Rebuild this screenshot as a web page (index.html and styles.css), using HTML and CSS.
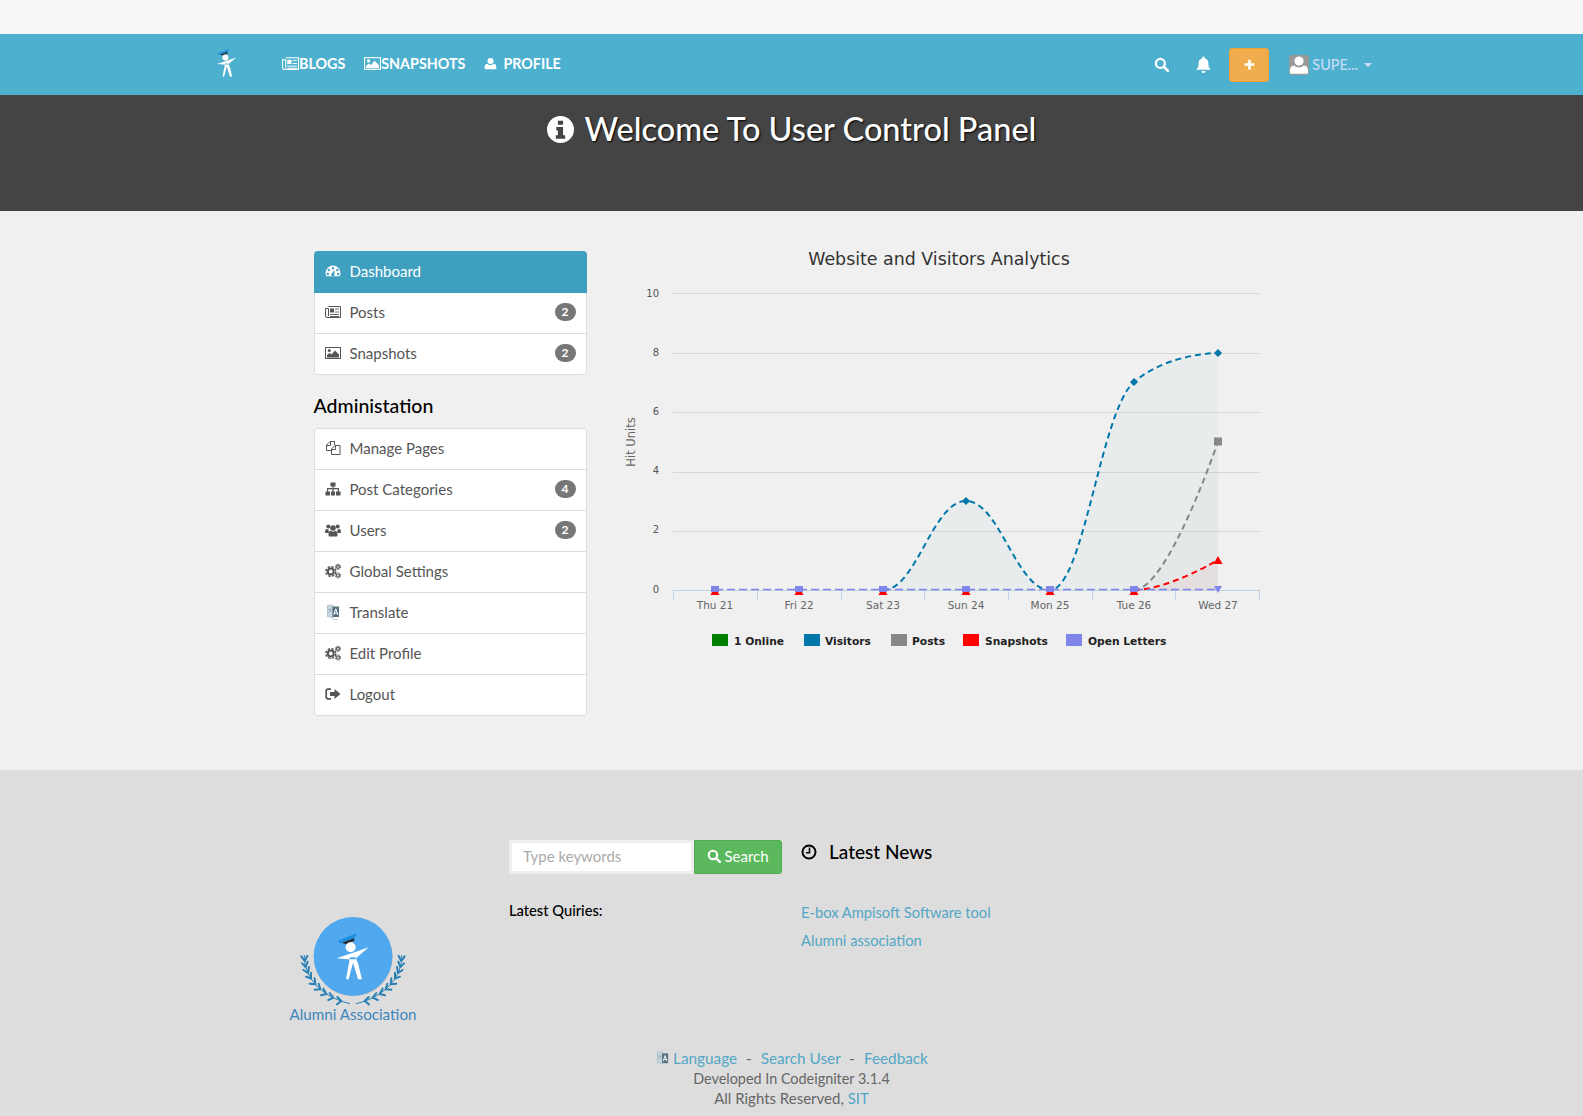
FILE: index.html
```html
<!DOCTYPE html>
<html lang="en">
<head>
    <meta charset="UTF-8">
    <title>User Control Panel</title>
    <link rel="stylesheet" href="styles.css">
</head>
<body>
    <!-- icon set -->
    <svg class="sprite" xmlns="http://www.w3.org/2000/svg">
        <symbol id="i-news" viewBox="0 0 16 16">
            <path fill="none" stroke="currentColor" d="M3.500 2.500h12v11H2A1.500 1.500 0 0 1 .5 12V4.500h3V12"/>
            <rect x="5" y="4.500" width="4" height="4" fill="currentColor"/>
            <path fill="none" stroke="currentColor" d="M10 5h4M10 8h4M5 10.500h9M5 12.500h9" stroke-width=".9"/>
        </symbol>
        <symbol id="i-picture" viewBox="0 0 16 16">
            <rect x=".5" y="2.500" width="15" height="11" fill="none" stroke="currentColor"/>
            <circle cx="4.300" cy="5.600" r="1.500" fill="currentColor"/>
            <path fill="currentColor" d="M2 12.500V10l2.500-2 2 1.500L10 5.500l4 4v3z"/>
        </symbol>
        <symbol id="i-user" viewBox="0 0 16 16">
            <circle cx="8" cy="4.800" r="3.700" fill="currentColor"/>
            <path fill="currentColor" d="M2 15c-1 0-1.300-.8-1.300-1.700 0-2.700.8-5 3.500-5 1 1 2.300 1.600 3.800 1.600s2.800-.6 3.800-1.600c2.700 0 3.500 2.300 3.500 5 0 .9-.3 1.700-1.300 1.700z"/>
        </symbol>
        <symbol id="i-search" viewBox="0 0 16 16">
            <circle cx="6.800" cy="6.800" r="4.800" fill="none" stroke="currentColor" stroke-width="2.400"/>
            <path d="M10.400 10.400l4.300 4.300" stroke="currentColor" stroke-width="2.800" stroke-linecap="round"/>
        </symbol>
        <symbol id="i-bell" viewBox="0 0 16 16">
            <path fill="currentColor" d="M8 .5a1.200 1.200 0 0 1 1.100 1.500C11.400 2.500 12.600 4.300 12.600 6.500c0 3.500.8 5 2.400 6.500H1c1.600-1.500 2.400-3 2.400-6.500C3.400 4.300 4.600 2.500 6.900 2A1.200 1.200 0 0 1 8 .5z"/>
            <path fill="currentColor" d="M6 14h4a2 2 0 0 1-4 0z"/>
        </symbol>
        <symbol id="i-plus" viewBox="0 0 16 16">
            <path fill="currentColor" d="M6.400 2h3.200v4.400H14v3.200H9.600V14H6.400V9.600H2V6.400h4.400z"/>
        </symbol>
        <symbol id="i-info" viewBox="0 0 26 26">
            <circle cx="13" cy="13" r="13" fill="#fff"/>
            <path fill="#444" d="M10.500 4.500h5v4h-5zM9 10.500h6.500v8H17.500v3.500h-9v-3.500h2v-4.500H9z"/>
        </symbol>
        <symbol id="i-dash" viewBox="0 0 16 16">
            <path fill="currentColor" fill-rule="evenodd" d="M8 2.500a7.500 7.500 0 0 1 7.500 7.500c0 1.200-.3 2.300-.8 3.300H1.300A7.500 7.500 0 0 1 .5 10 7.500 7.500 0 0 1 8 2.500zM8 4a1.200 1.200 0 1 0 0 2.400A1.200 1.200 0 0 0 8 4zM3.700 5.800a1.200 1.200 0 1 0 0 2.400 1.200 1.200 0 0 0 0-2.400zM12.300 5.800a1.200 1.200 0 1 0 0 2.400 1.200 1.200 0 0 0 0-2.400zM2.800 9.800a1.200 1.200 0 1 0 0 2.400 1.200 1.200 0 0 0 0-2.400zM13.200 9.800a1.200 1.200 0 1 0 0 2.400 1.200 1.200 0 0 0 0-2.400zM9.800 6.800 7.300 9.900a1.700 1.700 0 1 0 2 .6z"/>
        </symbol>
        <symbol id="i-files" viewBox="0 0 16 16">
            <path fill="none" stroke="currentColor" d="M6.500 10.500H1.500V5L5 1.500h4.500v3.500"/>
            <path fill="none" stroke="currentColor" d="M1.500 5.500H5.500V1.500"/>
            <path fill="none" stroke="currentColor" d="M6.500 9 10 5.500h5v9H6.500zM6.500 9.500h4v-4"/>
        </symbol>
        <symbol id="i-sitemap" viewBox="0 0 16 16">
            <path fill="currentColor" d="M5.500 1.500h5v4H8.600V7H14v3.500h1.500v4h-4.500v-4h1.800V8.200H8.600v2.300h1.400v4H6v-4h1.400V8.200H3.200v2.300H5v4H.5v-4H2V7h5.400V5.500H5.500z"/>
        </symbol>
        <symbol id="i-users" viewBox="0 0 16 16">
            <circle cx="3.300" cy="4.600" r="2" fill="currentColor"/>
            <circle cx="12.700" cy="4.600" r="2" fill="currentColor"/>
            <circle cx="8" cy="6" r="2.800" fill="currentColor"/>
            <path fill="currentColor" d="M0 10.500C0 8 .8 7 2.200 7.100c.5.400 1 .6 1.500.6-.2 1-.1 2.400.5 3.300H.8c-.5 0-.8-.2-.8-.5zM16 10.500C16 8 15.200 7 13.800 7.100c-.5.400-1 .6-1.500.6.200 1 .1 2.400-.5 3.300h3.400c.5 0 .8-.2.800-.5zM3.500 13c0-2.700.8-4.300 2.300-4.300.6.600 1.300.9 2.200.9s1.600-.3 2.200-.9c1.500 0 2.300 1.600 2.300 4.300 0 1-.6 1.500-1.400 1.500H4.900c-.8 0-1.400-.5-1.400-1.500z"/>
        </symbol>
        <symbol id="i-cogs" viewBox="0 0 16 16">
            <circle cx="5.800" cy="8.500" r="2.900" fill="none" stroke="currentColor" stroke-width="2"/>
            <circle cx="5.800" cy="8.500" r="4.900" fill="none" stroke="currentColor" stroke-width="1.500" stroke-dasharray="2.400 1.450"/>
            <circle cx="13" cy="3.800" r="1.500" fill="none" stroke="currentColor" stroke-width="1.200"/>
            <circle cx="13" cy="3.800" r="2.600" fill="none" stroke="currentColor" stroke-width="1" stroke-dasharray="1.300 .75"/>
            <circle cx="13" cy="12.500" r="1.500" fill="none" stroke="currentColor" stroke-width="1.200"/>
            <circle cx="13" cy="12.500" r="2.600" fill="none" stroke="currentColor" stroke-width="1" stroke-dasharray="1.300 .75"/>
        </symbol>
        <symbol id="i-lang" viewBox="0 0 16 16">
            <path fill="#c9d6e0" stroke="#9fb3c2" stroke-width=".7" d="M2.500 1.500 8 1v12.500l-5.500-1z"/>
            <rect x="7.500" y="2.500" width="6.500" height="10.500" fill="#56717f"/>
            <path fill="none" stroke="#fff" d="M8.800 10.800l2-6 2 6M9.500 9.200h2.600"/>
            <path fill="none" stroke="#8fa6b6" d="M3.500 5.500h3M5 4.500V6M3.800 9l2.500-3"/>
            <path fill="none" stroke="#c9d6e0" d="M8 13.500v2h5"/>
        </symbol>
        <symbol id="i-signout" viewBox="0 0 16 16">
            <path fill="none" stroke="currentColor" stroke-width="1.700" d="M6 3.200H3A1.800 1.800 0 0 0 1.200 5v6A1.800 1.800 0 0 0 3 12.800h3"/>
            <path fill="currentColor" d="M5 6h4.500V3l6 5-6 5v-3H5z"/>
        </symbol>
        <symbol id="i-clock" viewBox="0 0 16 16">
            <circle cx="8" cy="8" r="6.500" fill="none" stroke="currentColor" stroke-width="2"/>
            <path fill="none" stroke="currentColor" stroke-width="1.500" d="M8.500 3.500v5.200H5"/>
        </symbol>
        <symbol id="i-grad" viewBox="160 90 120 160">
            <path fill="#1c8fe0" d="M174 122 231 99l-8 15-38 14-3 4z"/>
            <path fill="#2c2c2c" d="M186 128 223 114v8l-26 11z"/>
            <circle cx="212" cy="142" r="15" fill="#fff"/>
            <path fill="#fff" d="M170 175 215 160 266 142 238 166 226 178 203 178zM210 172 198 238 206 238 219 188 234 238 246 238 234 190 226 172z"/>
        </symbol>
        <symbol id="i-wreath" viewBox="0 0 450 390">
            <g transform="translate(8 0)">
                <path fill="none" stroke="#2a80b5" stroke-width="3" d="M65 165C62 225 110 290 202 311"/>
                <path fill="none" stroke="#2a80b5" stroke-width="6" stroke-linecap="round" d="M66 183l-10-14M66 183l8-15M69 201l-11-11M69 201l6-16M76 219l-14-9M76 219l3-18M85 236l-15-6M85 236v-18M98 253l-17-2M98 253l-2-18M113 268l-17 1M113 268l-5-17M131 282l-16 4M131 282l-9-16M152 293l-15 7M152 293l-11-14M176 303l-13 10M176 303l-12-12"/>
            </g>
        </symbol>
    </svg>

    <div class="topstrip"></div>

    <nav class="navbar">
        <a class="brand"><svg class="brand-mark"><use href="#i-grad"/></svg></a>
        <ul class="nav-links">
            <li><svg class="nav-ico"><use href="#i-news"/></svg>BLOGS</li>
            <li><svg class="nav-ico"><use href="#i-picture"/></svg>SNAPSHOTS</li>
            <li class="nav-profile"><svg class="nav-ico small"><use href="#i-user"/></svg>PROFILE</li>
        </ul>
        <div class="nav-right">
            <svg class="tool-ico"><use href="#i-search"/></svg>
            <svg class="tool-ico bell"><use href="#i-bell"/></svg>
            <button class="add-btn"><svg class="plus-ico"><use href="#i-plus"/></svg></button>
            <div class="account">
                <span class="avatar"><svg><use href="#i-user"/></svg></span>
                <span class="account-name">SUPE...</span>
                <span class="caret"></span>
            </div>
        </div>
    </nav>

    <header class="hero">
        <h1><svg class="hero-ico"><use href="#i-info"/></svg>Welcome To User Control Panel</h1>
    </header>

    <main class="content">
        <aside class="sidebar">
            <ul class="menu">
                <li class="active"><svg><use href="#i-dash"/></svg>Dashboard</li>
                <li class="after-active"><svg><use href="#i-news"/></svg>Posts<span class="badge">2</span></li>
                <li><svg><use href="#i-picture"/></svg>Snapshots<span class="badge">2</span></li>
            </ul>
            <h3>Administation</h3>
            <ul class="menu">
                <li><svg><use href="#i-files"/></svg>Manage Pages</li>
                <li><svg><use href="#i-sitemap"/></svg>Post Categories<span class="badge">4</span></li>
                <li><svg><use href="#i-users"/></svg>Users<span class="badge">2</span></li>
                <li><svg><use href="#i-cogs"/></svg>Global Settings</li>
                <li><svg><use href="#i-lang"/></svg>Translate</li>
                <li><svg><use href="#i-cogs"/></svg>Edit Profile</li>
                <li><svg><use href="#i-signout"/></svg>Logout</li>
            </ul>
        </aside>

        <section class="chart">
            <svg class="chart-svg" viewBox="620 240 650 420" width="650" height="420">
                <text class="chart-title" x="939" y="265">Website and Visitors Analytics</text>

                <g class="grid">
                    <path d="M673 293.500H1260M673 353.500H1260M673 412.500H1260M673 472.500H1260M673 531.500H1260"/>
                </g>
                <path class="axis" d="M673 590.500H1260M673.500 590V600M757.500 590V600M841.500 590V600M924.500 590V600M1008.500 590V600M1092.500 590V600M1175.500 590V600M1259.500 590V600"/>

                <g class="y-labels">
                    <text x="659" y="297">10</text>
                    <text x="659" y="356">8</text>
                    <text x="659" y="415">6</text>
                    <text x="659" y="474">4</text>
                    <text x="659" y="533">2</text>
                    <text x="659" y="593">0</text>
                </g>
                <text class="y-title" transform="translate(635 442) rotate(-90)">Hit Units</text>
                <g class="x-labels">
                    <text x="715" y="609">Thu 21</text>
                    <text x="799" y="609">Fri 22</text>
                    <text x="883" y="609">Sat 23</text>
                    <text x="966" y="609">Sun 24</text>
                    <text x="1050" y="609">Mon 25</text>
                    <text x="1134" y="609">Tue 26</text>
                    <text x="1218" y="609">Wed 27</text>
                </g>

                <!-- areas -->
                <path fill="#0077aa" fill-opacity=".03" d="M883 590C916.600 590 932.400 501 966 501C999.600 501 1016.400 590 1050 590C1083.600 590 1100.400 411 1134 382C1167.600 353 1218 353 1218 353V590Z"/>
                <path fill="#888" fill-opacity=".03" d="M1134 590C1167.600 590 1218 441.500 1218 441.500V590Z"/>
                <path fill="#f00" fill-opacity=".04" d="M1134 590C1167.600 590 1218 560 1218 560V590Z"/>

                <!-- lines -->
                <path class="line" stroke="#0077aa" d="M883 590C916.600 590 932.400 501 966 501C999.600 501 1016.400 590 1050 590C1083.600 590 1100.400 411 1134 382C1167.600 353 1218 353 1218 353"/>
                <path class="line" stroke="#888" d="M1134 590C1167.600 590 1218 441.500 1218 441.500"/>
                <path class="line" stroke="#f00" d="M1134 590C1167.600 590 1218 560 1218 560"/>
                <path class="line flat" stroke="#8085e9" d="M715 589.500H1218"/>

                <!-- markers -->
                <g fill="#f00">
                    <path d="M715 586l4.500 9h-9zM799 586l4.500 9h-9zM883 586l4.500 9h-9zM966 586l4.500 9h-9zM1050 586l4.500 9h-9zM1134 586l4.500 9h-9zM1218 556l4.500 8h-9z"/>
                </g>
                <g fill="#0077aa">
                    <path d="M966 497l4 4-4 4-4-4zM1134 378l4 4-4 4-4-4zM1218 349l4 4-4 4-4-4z"/>
                </g>
                <rect x="1214" y="437.500" width="8" height="8" fill="#888"/>
                <g fill="#8085e9">
                    <rect x="711" y="586" width="8" height="6"/>
                    <rect x="795" y="586" width="8" height="6"/>
                    <rect x="879" y="586" width="8" height="6"/>
                    <rect x="962" y="586" width="8" height="6"/>
                    <rect x="1046" y="586" width="8" height="6"/>
                    <rect x="1130" y="586" width="8" height="6"/>
                    <path d="M1214 586h8l-4 7z"/>
                </g>

                <!-- legend -->
                <g class="legend">
                    <rect x="712" y="634" width="16" height="12" fill="#008000"/>
                    <text x="734" y="645">1 Online</text>
                    <rect x="804" y="634" width="16" height="12" fill="#0077aa"/>
                    <text x="825" y="645">Visitors</text>
                    <rect x="891" y="634" width="16" height="12" fill="#888"/>
                    <text x="912" y="645">Posts</text>
                    <rect x="963" y="634" width="16" height="12" fill="#f00"/>
                    <text x="985" y="645">Snapshots</text>
                    <rect x="1066" y="634" width="16" height="12" fill="#8085e9"/>
                    <text x="1088" y="645">Open Letters</text>
                </g>
            </svg>
        </section>
    </main>

    <footer class="site-footer">
        <div class="footer-cols">
            <div class="footer-logo">
                <svg viewBox="0 0 450 390" width="150" height="130">
                    <use href="#i-wreath" width="450" height="390"/>
                    <use href="#i-wreath" width="450" height="390" transform="translate(438 0) scale(-1 1)"/>
                    <circle cx="220" cy="171" r="118" fill="#b4b4b4"/>
                    <circle cx="219" cy="169" r="118" fill="#50a8ee"/>
                    <use href="#i-grad" x="160" y="90" width="120" height="160"/>
                    <text class="logo-text" x="219" y="359">Alumni Association</text>
                </svg>
            </div>
            <div class="footer-search">
                <form class="search-form">
                    <input type="text" placeholder="Type keywords">
                    <button type="button"><svg><use href="#i-search"/></svg>Search</button>
                </form>
                <p class="queries">Latest Quiries:</p>
            </div>
            <div class="footer-news">
                <h4><svg><use href="#i-clock"/></svg>Latest News</h4>
                <ul>
                    <li><a>E-box Ampisoft Software tool</a></li>
                    <li><a>Alumni association</a></li>
                </ul>
            </div>
        </div>
        <div class="footer-bottom">
            <p class="links"><svg class="lang-ico"><use href="#i-lang"/></svg><a>Language</a> <span class="sep">-</span> <a>Search User</a> <span class="sep">-</span> <a>Feedback</a></p>
            <p class="built">Developed In Codeigniter 3.1.4</p>
            <p>All Rights Reserved, <a>SIT</a></p>
        </div>
    </footer>
</body>
</html>
```
FILE: styles.css
```css
/* general */
* {
    box-sizing: border-box;
}

body {
    margin: 0;
    font-family: Lato, "Open Sans", sans-serif;
    font-size: 15px;
    color: #555;
    background: #f0f0f0;
}

ul {
    list-style: none;
    margin: 0;
    padding: 0;
}

.sprite {
    display: none;
}

.topstrip {
    height: 34px;
    background: #f8f8f8;
}

/* navbar */
.navbar {
    display: flex;
    align-items: center;
    height: 61px;
    padding: 0 211px 0 215px;
    background: #4eb0cf;
    color: #fff;
}

.brand-mark {
    display: block;
    width: 24px;
    height: 32px;
    margin-top: -3px;
}

.nav-links {
    display: flex;
    margin-left: 43px;
    margin-bottom: 2px;
    gap: 19px;
    font-size: 14.300px;
    font-weight: 700;
}

.nav-links li {
    display: flex;
    align-items: center;
}

.nav-ico {
    width: 17px;
    height: 17px;
}

.nav-ico.small {
    width: 13px;
    height: 13px;
    margin-right: 6px;
}

.nav-right {
    display: flex;
    align-items: center;
    margin-left: auto;
}

.tool-ico {
    width: 15px;
    height: 15px;
    margin-right: 26px;
}

.tool-ico.bell {
    width: 17px;
    height: 17px;
    margin-right: 17px;
}

.add-btn {
    width: 40px;
    height: 34px;
    padding: 0;
    border: 1px solid #eea236;
    border-radius: 3px;
    background: #f0ad4e;
    color: #fff;
}

.plus-ico {
    display: block;
    width: 13px;
    height: 13px;
    margin: auto;
}

.account {
    display: flex;
    align-items: center;
    margin-left: 20px;
    color: #c9dcf7;
    font-size: 14.400px;
    font-weight: 500;
}

.avatar {
    display: block;
    width: 20px;
    height: 20px;
    margin-right: 3px;
    border-radius: 3px;
    background: #999;
    color: #fff;
    overflow: hidden;
}

.avatar svg {
    display: block;
    width: 20px;
    height: 20px;
}

.caret {
    width: 0;
    height: 0;
    margin-left: 6px;
    border-top: 4px solid #c9dcf7;
    border-left: 4px solid transparent;
    border-right: 4px solid transparent;
}

/* dark welcome band */
.hero {
    height: 116px;
    padding-top: 15px;
    background: #444;
    text-align: center;
}

.hero h1 {
    display: flex;
    align-items: center;
    justify-content: center;
    margin: 0;
    color: #fff;
    font-size: 32.500px;
    font-weight: 500;
    line-height: 38px;
    text-shadow: 1px 1px 2px #000;
}

.hero-ico {
    width: 27px;
    height: 27px;
    margin-right: 11px;
}

/* main area */
.content {
    display: flex;
    width: 956px;
    height: 559px;
    margin: 0 auto;
    padding-top: 40px;
}

.sidebar {
    width: 273px;
    flex: none;
}

.menu {
    background: #fff;
    border: 1px solid #ddd;
    border-radius: 4px;
}

.menu li {
    display: flex;
    align-items: center;
    height: 41px;
    padding: 0 10px 2px 10px;
    border-top: 1px solid #ddd;
}

.menu li:first-child {
    height: 40px;
    border-top: 0;
}

.menu .after-active {
    height: 40px;
    border-top: 0;
}

.menu svg {
    width: 16px;
    height: 16px;
    margin-right: 9px;
    flex: none;
}

.menu .active,
.menu .active:first-child {
    height: 42px;
    margin: -1px -1px 0;
    padding-left: 11px;
    border-radius: 4px 4px 0 0;
    background: #3e9fbf;
    color: #fff;
}

.badge {
    margin-left: auto;
    width: 21px;
    height: 18px;
    border-radius: 10px;
    background: #777;
    color: #fff;
    font-size: 12px;
    font-weight: 700;
    line-height: 18px;
    text-align: center;
}

.sidebar h3 {
    margin: 19px 0 10px;
    color: #000;
    font-size: 19.500px;
    font-weight: 500;
    line-height: 24px;
}

.chart {
    width: 650px;
    margin-left: 33px;
    margin-top: -11px;
}

.chart-svg {
    display: block;
    font-family: "DejaVu Sans", sans-serif;
}

.chart-title {
    fill: #333;
    font-size: 17.400px;
    text-anchor: middle;
}

.grid path {
    fill: none;
    stroke: #d8d8d8;
}

.axis {
    fill: none;
    stroke: #c0d0e0;
}

.y-labels text {
    fill: #555;
    font-size: 10px;
    text-anchor: end;
}

.x-labels text {
    fill: #666;
    font-size: 10.500px;
    text-anchor: middle;
}

.y-title {
    fill: #666;
    font-size: 11.500px;
    text-anchor: middle;
}

.line {
    fill: none;
    stroke-width: 2;
    stroke-dasharray: 6 4;
}

.line.flat {
    stroke-width: 1.500;
    stroke-dasharray: 8 4;
}

.legend text {
    fill: #222;
    font-size: 10.700px;
    font-weight: 700;
}

/* footer */
.site-footer {
    height: 346px;
    padding-top: 70px;
    background: #ddd;
}

.footer-cols {
    display: grid;
    grid-template-columns: 229px 292px 1fr;
    height: 208px;
    margin-left: 280px;
}

.footer-logo {
    padding-top: 60px;
}

.footer-logo svg {
    display: block;
}

.logo-text {
    fill: #3d86bd;
    font-size: 45.500px;
    text-anchor: middle;
}

.search-form {
    display: flex;
    width: 273px;
    height: 34px;
}

.search-form input {
    width: 185px;
    height: 34px;
    padding: 0 11px 2px;
    border: 3px solid #eee;
    background: #fff;
    font: 15px Lato, sans-serif;
    outline: 0;
}

.search-form input::placeholder {
    color: #aaa;
}

.search-form button {
    display: flex;
    align-items: center;
    justify-content: center;
    width: 88px;
    padding: 0 0 2px;
    border: 1px solid #4cae4c;
    border-radius: 0 3px 3px 0;
    background: #5cb85c;
    color: #fff;
    font: 15px Lato, sans-serif;
}

.search-form svg {
    width: 14px;
    height: 14px;
    margin-right: 3px;
}

.queries {
    margin: 26px 0 0;
    color: #000;
    font-size: 14.700px;
    font-weight: 500;
    line-height: 20px;
}

.footer-news h4 {
    display: flex;
    align-items: center;
    margin: 0 0 38px;
    color: #000;
    font-size: 19px;
    font-weight: 500;
    line-height: 24px;
}

.footer-news h4 svg {
    width: 16px;
    height: 16px;
    margin-right: 12px;
}

.footer-news li {
    height: 28px;
    font-size: 14.700px;
    line-height: 20px;
}

a {
    color: #52a7c6;
}

.footer-bottom {
    color: #666;
    text-align: center;
    line-height: 20px;
}

.footer-bottom p {
    margin: 0;
}

.footer-bottom .links {
    font-size: 15.300px;
}

.footer-bottom .built {
    height: 20px;
    font-size: 14.400px;
    line-height: 22px;
}

.lang-ico {
    width: 15px;
    height: 15px;
    margin-right: 3px;
    vertical-align: -2px;
}

.sep {
    margin: 0 5px;
}
```
